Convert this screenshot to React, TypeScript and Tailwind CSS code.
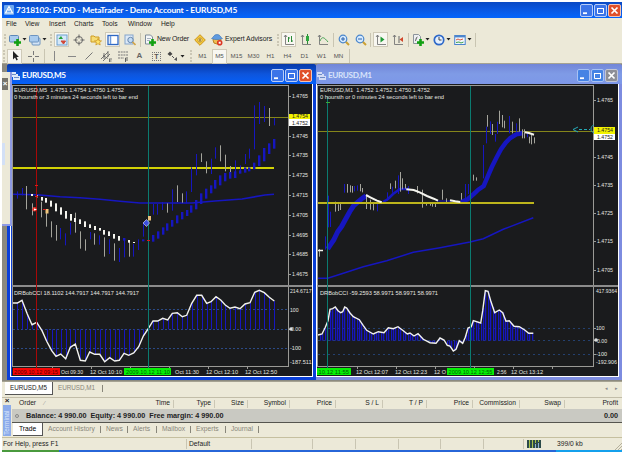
import type { ReactNode } from 'react'
import clsx from 'clsx'

type Point = [number, number]
type Bar = [number, number, number]

const BLUE = '#1616c0'
const GRAY = '#a4a49c'

// Chart data is kept at three times the drawn size.
const join = (points: Point[], ox: number, oy: number) =>
  points.map(([x, y]) => `${(ox + x / 3).toFixed(1)},${(oy + y / 3).toFixed(1)}`).join(' ')

function Bars({
  data,
  ox,
  oy,
  color,
  width = 1,
}: {
  data: Bar[]
  ox: number
  oy: number
  color: string
  width?: number
}) {
  return (
    <>
      {data.map(([x, top, bottom], i) => (
        <rect
          key={i}
          x={Math.round(ox + x / 3 - width / 2)}
          y={oy + top / 3}
          width={width}
          height={(bottom - top) / 3}
          fill={color}
        />
      ))}
    </>
  )
}

function Label({
  x,
  y,
  w,
  size = 6.2,
  children,
  fill = '#e6e6e0',
}: {
  x: number
  y: number
  w: number
  size?: number
  children: string
  fill?: string
}) {
  return (
    <text
      x={x}
      y={y + 2.2}
      textLength={w}
      lengthAdjust="spacingAndGlyphs"
      fill={fill}
      fontSize={size}
      fontFamily='"Liberation Sans Narrow", "Liberation Sans", sans-serif'
    >
      {children}
    </text>
  )
}

function Frame({ right, ticks }: { right: number; ticks: number[] }) {
  return (
    <g stroke="#9a9a96" fill="none" shapeRendering="crispEdges">
      <path d={`M0 1.5H${right}`} />
      <path d={`M.5 1V283M${right + 0.5} 1V283`} />
      <path d="M0 202H600" strokeWidth="2" stroke="#8c8c8c" />
      <path d={`M0 282.5H${right}`} />
      {ticks.map((t) => (
        <path key={t} d={`M${right} ${t + 0.5}h3`} />
      ))}
      {[40, 79, 118, 157, 196, 235].map((t) => (
        <path key={t} d={`M${t + 0.5} 283v2`} />
      ))}
    </g>
  )
}

const m5Average: Point[] = [
  [0, 331], [74, 332], [144, 338], [204, 341], [264, 346], [324, 352], [384, 357], [540, 357],
  [609, 351], [690, 345], [759, 333], [786, 331],
]

const m5WhiteSteps: Bar[] = [
  [96, 42, 48], [110, 46, 52], [125, 51, 62], [138, 54, 68], [153, 62, 80], [168, 70, 94],
  [182, 82, 104], [197, 93, 116], [212, 102, 122], [226, 114, 126], [240, 118, 132],
  [255, 124, 141], [270, 133, 144], [284, 138, 150], [299, 144, 152], [313, 150, 164],
  [328, 154, 168], [342, 162, 176], [357, 168, 182], [387, 180, 188], [401, 186, 189],
]

const m5BlueSteps: Bar[] = [
  [372, 174, 182], [430, 178, 184], [459, 165, 185], [474, 154, 176],
  [489, 142, 164], [503, 130, 152], [516, 120, 140], [531, 106, 130], [546, 96, 118],
  [561, 90, 108], [575, 76, 98], [590, 60, 88], [603, 40, 72], [618, 26, 56], [633, 16, 40],
  [647, 0, 26], [662, -14, 16], [676, -21, 4], [691, -24, -4], [705, -26, -6], [721, -29, -19],
  [735, -38, -22], [749, -38, -26], [764, -52, -32], [778, -74, -42], [793, -96, -56],
  [807, -110, -78], [822, -123, -94],
]

const m5Gray: Bar[] = [
  [80, 18, 88], [96, 70, 106], [125, 65, 112], [140, 90, 140], [153, 124, 172], [168, 135, 182],
  [226, 98, 158], [240, 154, 206], [255, 178, 212], [284, 160, 194], [313, 172, 230],
  [342, 190, 242], [387, 180, 230], [503, 70, 98], [532, 16, 66], [547, 40, 68],
  [605, -80, -54], [619, -56, -20], [661, -104, -56], [676, -76, -26], [691, -42, -24],
  [808, -216, -162],
]

const m5Blue: Bar[] = [
  [52, 34, 56], [66, 24, 46], [182, 144, 178], [197, 160, 196], [211, 128, 164], [270, 156, 178],
  [299, 166, 194], [328, 178, 222], [357, 204, 246], [372, 180, 232], [401, 192, 230],
  [416, 178, 210], [430, 128, 170], [459, 72, 104], [473, 72, 104],
  [487, 66, 90], [517, 28, 92], [560, 34, 70], [575, -38, 36], [590, -78, -14], [633, -64, -18],
  [647, -98, -64], [705, -59, -24], [721, -44, -26], [735, -78, -48], [749, -94, -64],
  [764, -224, -92], [778, -234, -168], [793, -222, -174], [822, -186, -164],
]

const m5Cci: Point[] = [
  [36, 57], [52, 57], [66, 49], [82, 90], [96, 122], [110, 115], [126, 140], [140, 172],
  [155, 200], [168, 217], [182, 210], [197, 224], [211, 190], [226, 180], [241, 229], [256, 231],
  [269, 204], [284, 211], [299, 211], [314, 233], [329, 221], [344, 231], [358, 229], [372, 208],
  [386, 214], [401, 207], [416, 188], [430, 156], [444, 135], [459, 111], [473, 111], [488, 103],
  [503, 108], [517, 88], [532, 86], [547, 98], [560, 94], [575, 58], [590, 34], [605, 34],
  [620, 58], [633, 53], [648, 38], [662, 48], [676, 63], [690, 73], [705, 69], [720, 74],
  [735, 60], [750, 56], [764, 25], [778, 19], [793, 26], [808, 40], [823, 51],
]

function M5Chart() {
  return (
    <svg className="block" width="300" height="292" viewBox="0 0 300 292">
      <rect width="300" height="292" fill="#1a1b1d" />
      <path d="M1 33.5H276" stroke="#85851a" shapeRendering="crispEdges" />
      <path d="M1 84H262" stroke="#d2d205" strokeWidth="2" shapeRendering="crispEdges" />
      <polyline points={join(m5Average, 0, 0)} fill="none" stroke={BLUE} strokeWidth="1.6" />
      <Bars data={m5Gray} ox={-12} oy={96} color={GRAY} />
      <Bars data={m5Blue} ox={-12} oy={96} color={BLUE} />
      <Bars data={m5WhiteSteps} ox={-12} oy={96} color="#f4f4ee" width={2} />
      <Bars data={m5BlueSteps} ox={-12} oy={96} color={BLUE} width={2.4} />
      <path d="M1 225.5H276M1 245.5H276M1 264.5H276" stroke="#2b4a86" strokeDasharray="2 2" />
      {m5Cci.map(([x, y]) => (
        <rect
          key={x}
          x={Math.round(x / 3 - 12)}
          y={200 + Math.min(y, 136) / 3}
          width="1"
          height={Math.abs(y - 136) / 3}
          fill={BLUE}
        />
      ))}
      <polyline points={join(m5Cci, -12, 200)} fill="none" stroke="#f2f2ee" strokeWidth="1.4" />
      <Frame right={276} ticks={[12, 52, 71, 91, 111, 131, 151, 170, 190, 245]} />
      <path d="M24.5 2V284" stroke="#a80808" shapeRendering="crispEdges" />
      <path d="M136.5 2V284" stroke="#0b7b70" shapeRendering="crispEdges" />
      <path d="M23 101.5h3M23 112.5h3M135 156.5h3" stroke="#e01818" />
      <circle cx="22.5" cy="125.3" r="2.2" fill="#e8342a" />
      <path d="M22 124.5l3 1-3 1z" fill="#fff" />
      <rect x="33.5" y="125" width="3" height="4.5" fill="#f0c67c" />
      <path d="M31 125.5h3" stroke="#d02020" />
      <path d="M131 139l3.5-3.5 3 3.5-3 3.5z" fill="#3c50e0" stroke="#e6e9ff" strokeWidth=".6" />
      <rect x="136" y="132" width="3" height="4.5" fill="#e9c17c" />
      <Label x={2} y={6} w={110}>EURUSD,M5 &nbsp;1.4751 1.4754 1.4750 1.4752</Label>
      <Label x={2} y={12.5} w={124}>0 hoursth or 3 minutes 24 seconds left to bar end</Label>
      <Label x={2} y={208.5} w={125}>DRBobCCI 18.1102 144.7917 144.7917 144.7917</Label>
      {[
        [12, '1.4765'], [52, '1.4745'], [71, '1.4735'], [91, '1.4725'], [111, '1.4715'],
        [131, '1.4705'], [151, '1.4695'], [170, '1.4685'], [190, '1.4675'],
      ].map(([y, text]) => (
        <Label key={text} x={280} y={y as number} w={16}>{text as string}</Label>
      ))}
      <rect x="277" y="30" width="21" height="6" fill="#f2f200" />
      <Label x={280} y={32} w={16} fill="#222">1.4754</Label>
      <rect x="277" y="35" width="21" height="7" fill="#fff" />
      <Label x={280} y={38.5} w={16} fill="#222">1.4752</Label>
      <Label x={278} y={207} w={21.5} size={5.3}>214.6717</Label>
      <Label x={278} y={225.5} w={8.5}>100</Label>
      <circle cx="279" cy="245" r="1.8" fill="#ddd" />
      <Label x={279} y={245} w={10}>0.00</Label>
      <Label x={278} y={264} w={11}>-100</Label>
      <Label x={278} y={278} w={21.5} size={5.3}>-187.511</Label>
      <Label x={49} y={287.5} w={22}>Oct 09:30</Label>
      <Label x={78} y={287.5} w={32}>12 Oct 10:10</Label>
      <Label x={163} y={287.5} w={24}>Oct 11:30</Label>
      <Label x={194} y={287.5} w={32}>12 Oct 12:10</Label>
      <Label x={233} y={287.5} w={32}>12 Oct 12:50</Label>
      <rect x="1" y="284" width="47" height="7" fill="#f60505" />
      <Label x={2} y={287.5} w={44} fill="#5b0000">2009.10.12 09:15</Label>
      <rect x="112" y="284" width="47" height="7" fill="#06f006" />
      <Label x={114} y={287.5} w={44} fill="#045c04">2009.10.12 11:10</Label>
    </svg>
  )
}

const m1Average: Point[] = [
  [3, 265], [32, 265], [79, 250], [139, 230], [209, 212], [289, 187], [369, 173], [459, 156],
  [499, 146], [559, 118], [649, 83],
]

const m1Rise: Point[] = [
  [32, 492], [40, 480], [50, 465], [62, 440], [74, 424], [86, 402], [98, 380],
  [110, 362], [124, 350], [138, 338], [147, 333],
]

const m1Climb: Point[] = [
  [432, 354], [452, 346], [470, 330], [484, 317], [500, 306], [512, 278],
  [524, 250], [538, 222], [552, 196], [566, 176], [580, 162], [598, 151], [618, 147],
]

const m1WhiteRuns: Point[][] = [
  [[147, 333], [160, 340], [180, 350], [194, 355]],
  [[268, 316], [290, 318], [308, 325], [330, 336], [350, 344], [363, 350]],
  [[399, 349], [415, 352], [430, 354]],
  [[624, 145], [636, 147], [651, 152]],
]

const m1Gray: Bar[] = [
  [8, 495, 518], [55, 353, 383], [64, 361, 381], [71, 354, 378], [92, 300, 326],
  [99, 304, 325], [107, 306, 326], [129, 300, 322], [135, 312, 325], [149, 335, 375],
  [161, 347, 377], [169, 360, 379], [219, 298, 315], [235, 290, 313], [250, 264, 323],
  [257, 283, 316], [265, 300, 314], [301, 306, 328], [317, 317, 371], [329, 355, 365],
  [339, 355, 365], [347, 355, 368], [354, 355, 369], [377, 317, 347], [389, 343, 356],
  [434, 327, 347], [470, 272, 290], [479, 280, 290], [512, 93, 128],
  [525, 120, 153], [548, 80, 120], [556, 93, 130], [563, 110, 133], [586, 113, 148],
  [608, 103, 143], [616, 136, 163], [623, 136, 163], [636, 158, 178], [644, 153, 181],
  [651, 160, 178],
]

const m1Blue: Bar[] = [
  [26, 457, 497], [34, 335, 430], [41, 383, 429], [82, 300, 326], [112, 306, 322], [122, 304, 320],
  [227, 308, 326], [244, 274, 330], [273, 306, 330], [180, 360, 382], [212, 325, 350],
  [445, 300, 352], [455, 300, 330], [500, 183, 283], [507, 128, 178],
  [519, 112, 150], [536, 150, 173], [542, 113, 150], [578, 96, 148], [599, 118, 143],
  [608, 114, 150], [630, 146, 160],
]

const m1Cci: Point[] = [
  [24, 153], [36, 150], [46, 130], [54, 110], [60, 76], [68, 74], [76, 69], [84, 80], [92, 86],
  [98, 83], [104, 69], [110, 72], [120, 87], [130, 98], [148, 107], [160, 125], [170, 139],
  [190, 150], [205, 143], [222, 146], [235, 131], [250, 134], [264, 128], [280, 140], [292, 150],
  [300, 147], [312, 156], [324, 149], [340, 166], [360, 176], [378, 178], [390, 162], [402, 168],
  [412, 184], [420, 186], [430, 201], [438, 196], [448, 170], [458, 178], [466, 160], [474, 132],
  [484, 128], [490, 110], [512, 117], [518, 80], [526, 20], [534, 22], [542, 50], [554, 86],
  [568, 78], [578, 86], [588, 112], [598, 110], [612, 127], [628, 128], [644, 138], [656, 148],
  [670, 148],
]

function valueAt(points: Point[], x: number) {
  const i = points.findIndex((p) => p[0] >= x)
  if (i < 1) return points[0][1]
  const [x0, y0] = points[i - 1]
  const [x1, y1] = points[i]
  return y0 + ((y1 - y0) * (x - x0)) / (x1 - x0)
}

const m1Columns = Array.from({ length: 88 }, (_, i) => 30 + i * 7.3).filter((x) => x < 671)

function M1Chart() {
  return (
    <svg className="block" width="301" height="292" viewBox="0 0 301 292">
      <rect width="301" height="292" fill="#1a1b1d" />
      <path d="M1 47.5H276" stroke="#85851a" shapeRendering="crispEdges" />
      <polyline points={join(m1Average, 0, 106)} fill="none" stroke={BLUE} strokeWidth="1.5" />
      <Bars data={m1Blue} ox={0} oy={0} color={BLUE} />
      <polyline points={join(m1Rise, 0, 1)} fill="none" stroke={BLUE} strokeWidth="5" />
      <path d="M66 118l5-3 5-5 7-5 8 0" fill="none" stroke={BLUE} strokeWidth="2.5" />
      <path d="M120 117h15" stroke={BLUE} />
      <polyline points={join(m1Climb, 0, 0)} fill="none" stroke={BLUE} strokeWidth="4.5" />
      <Bars data={m1Gray} ox={0} oy={0} color={GRAY} />
      <path d="M1 119H217" stroke="#bdb51c" strokeWidth="2" shapeRendering="crispEdges" />
      <path d="M1 166.5h5" stroke="#f4f4ee" strokeWidth="1.5" />
      {m1WhiteRuns.map((run, i) => (
        <polyline key={i} points={join(run, 0, 0)} fill="none" stroke="#f4f4ee" strokeWidth="2" />
      ))}
      <path d="M1 244.5H276M1 256.5H276M1 270.5H276" stroke="#24406f" strokeDasharray="2 3" />
      {m1Columns.map((x) => {
        const y = valueAt(m1Cci, x)
        return (
          <rect
            key={x}
            x={Math.round(x / 3 - 7)}
            y={200 + Math.min(y, 170) / 3}
            width="1.3"
            height={Math.abs(y - 170) / 3}
            fill={BLUE}
          />
        )
      })}
      <polyline points={join(m1Cci, -7, 200)} fill="none" stroke="#f2f2ee" strokeWidth="1.4" />
      <Frame right={276} ticks={[16, 73, 101, 129, 157, 186, 244, 256, 270]} />
      <path d="M10.5 12V284M153.5 2V284" stroke="#0b7b70" shapeRendering="crispEdges" />
      <path d="M9 18.5h4" stroke="#38a838" />
      <path d="M261 43l-5 2.5 5 2.5" fill="none" stroke="#25a9b5" />
      <path d="M262 45.5H273" stroke="#25a9b5" strokeDasharray="3 2" />
      <path d="M277 41c-4 1-4 7 0 8" fill="none" stroke="#25a9b5" />
      <Label x={3} y={6} w={110}>EURUSD,M1 &nbsp;1.4752 1.4752 1.4750 1.4752</Label>
      <Label x={3} y={12.5} w={124}>0 hoursth or 0 minutes 24 seconds left to bar end</Label>
      <Label x={3} y={208.5} w={118}>DRBobCCI -59.2593 58.9971 58.9971 58.9971</Label>
      {[
        [16, '1.4765'], [73, '1.4745'], [101, '1.4735'], [129, '1.4725'], [157, '1.4715'],
        [186, '1.4705'],
      ].map(([y, text]) => (
        <Label key={text} x={280} y={y as number} w={16}>{text as string}</Label>
      ))}
      <rect x="277" y="43" width="21" height="7" fill="#f2f200" />
      <Label x={280} y={46} w={16} fill="#222">1.4754</Label>
      <rect x="277" y="50" width="21" height="6" fill="#fff" />
      <Label x={280} y={53} w={16} fill="#222">1.4752</Label>
      <Label x={279} y={207} w={21} size={5.3}>417.9364</Label>
      <Label x={279} y={244} w={8.5}>100</Label>
      <circle cx="279" cy="256" r="1.8" fill="#ddd" />
      <Label x={280} y={256.5} w={10}>0.00</Label>
      <Label x={279} y={269.5} w={11}>-100</Label>
      <Label x={279} y={278} w={21} size={5.1}>-192.906</Label>
      <Label x={39} y={287.5} w={32}>12 Oct 12:07</Label>
      <Label x={78} y={287.5} w={32}>12 Oct 12:23</Label>
      <Label x={117} y={287.5} w={12}>12 O</Label>
      <Label x={180} y={287.5} w={9.5}>2:56</Label>
      <Label x={194} y={287.5} w={32}>12 Oct 13:12</Label>
      <rect x="0" y="284" width="34" height="7" fill="#06f006" />
      <Label x={0} y={287.5} w={32} fill="#045c04">.10.12 11:55</Label>
      <rect x="130" y="284" width="47" height="7" fill="#06f006" />
      <Label x={131.5} y={287.5} w={44} fill="#045c04">2009.10.12 12:55</Label>
    </svg>
  )
}

function CaptionButton({ kind, active = true }: { kind: 'min' | 'max' | 'close'; active?: boolean }) {
  const color =
    kind !== 'close'
      ? active
        ? 'bg-[#3c74e8] border-[#b9cdf8]'
        : 'bg-[#4583e4] border-[#a8c2f4]'
      : active
        ? 'bg-[#e0502a] border-[#f2c4b4]'
        : 'bg-[#8e8f96] border-[#c3c6d4]'
  return (
    <span className={clsx('flex size-[13px] items-center justify-center rounded-[2px] border', color)}>
      <svg width="9" height="9" viewBox="0 0 9 9" stroke="#fff" fill="none">
        {kind === 'min' && <path d="M1 7.2h4" strokeWidth="1.8" />}
        {kind === 'max' && <path d="M1 2.5h7M1.5 2v5.5h6V2" />}
        {kind === 'close' && <path d="M1.5 1.5l6 6M7.5 1.5l-6 6" strokeWidth="1.7" />}
      </svg>
    </span>
  )
}

function ChartWindow({ title, active, children }: { title: string; active: boolean; children: ReactNode }) {
  return (
    <section
      className={clsx(
        'flex h-[316px] shrink-0 flex-col rounded-t-[3px]',
        active ? 'w-[309px] bg-[#0a3fd8]' : 'w-[306px] bg-[#7d8ce0]',
      )}
    >
      <header
        className={clsx(
          'flex h-5 shrink-0 items-center rounded-t-[3px] pt-0.5',
          active
            ? 'bg-linear-to-b from-[#0839a8] via-[#0d55dc] to-[#0460fa] pl-[4px] pr-[4px]'
            : 'bg-linear-to-b from-[#7286d8] via-[#7f9be6] to-[#7d97e8] pl-[1px] pr-[4px]',
        )}
      >
        <svg width="9" height="9" viewBox="0 0 9 9">
          <path d="M0 1h5v2h2v2h2v4H2V6H0z" fill={active ? '#dfe9fa' : '#d3dcf5'} />
          <path d="M1 3.5h4M3 6.5h5" stroke="#5377b8" strokeWidth=".8" />
        </svg>
        <h2
          className={clsx(
            "ml-0.5 flex-1 font-['Lato','Liberation_Sans',sans-serif] text-[8.2px] font-bold tracking-[-0.38px]",
            active ? 'text-white' : 'text-[#d8e2fa]',
          )}
        >
          {title}
        </h2>
        <div className="flex gap-px">
          <CaptionButton kind="min" active={active} />
          <CaptionButton kind="max" active={active} />
          <CaptionButton kind="close" active={active} />
        </div>
      </header>
      <div
        className={clsx(
          'h-[293px] overflow-hidden border-r border-b border-white',
          active ? 'ml-[3px] mr-[3px] border-l pl-px' : 'mr-[3px] border-l',
        )}
      >
        {children}
      </div>
    </section>
  )
}

const Grip = ({ className }: { className: string }) => (
  <span className={clsx('flex shrink-0 items-center justify-center', className)}>
    <span className="h-3 w-0 border-l-2 border-dotted border-[#cbc7b5]" />
  </span>
)

const Separator = ({ className }: { className: string }) => (
  <span className={clsx('flex shrink-0 items-center justify-center', className)}>
    <span className="h-3.5 w-px bg-[#c9c5b2]" />
  </span>
)

function Tool({
  className = 'w-[17px]',
  pressed,
  menu,
  children,
}: {
  className?: string
  pressed?: boolean
  menu?: boolean
  children: ReactNode
}) {
  return (
    <span className={clsx('flex shrink-0 items-center justify-center', className)}>
      <span
        className={clsx(
          'flex h-[15px] items-center justify-center gap-px',
          pressed && 'w-[15px] border border-[#cfcab8] bg-[#f8f7f1]',
        )}
      >
        {children}
        {menu && (
          <svg width="5" height="3" viewBox="0 0 5 3">
            <path d="M.5 0h4L2.5 2.500z" fill="#222" />
          </svg>
        )}
      </span>
    </span>
  )
}

const Icon = ({ children }: { children: ReactNode }) => (
  <svg className="shrink-0" width="12" height="12" viewBox="0 0 12 12" fill="none" stroke="#4e4e4e">
    {children}
  </svg>
)

const Plus = () => <path d="M8.500 5v7M5 8.500h7" stroke="#12a012" strokeWidth="2.6" />
const Axes = () => <path d="M2.500 1v9.500H11M1 3l1.500-2L4 3" stroke="#777" strokeWidth=".9" />

function MainToolbar() {
  return (
    <div className="flex h-[17px] items-center">
      <Grip className="w-1.5" />
      <Tool className="w-[19px]" menu>
        <Icon>
          <rect x=".5" y="1.5" width="9" height="6.5" rx="1" fill="#a9cbee" stroke="#5c87b8" />
          <Plus />
        </Icon>
      </Tool>
      <Tool className="w-[22px]" menu>
        <Icon>
          <rect x="3" y="4" width="8" height="7" rx="1" fill="#d3e3f5" stroke="#6d94c0" />
          <rect x=".5" y="1.5" width="9" height="6.5" rx="1" fill="#a9cbee" stroke="#6d94c0" />
        </Icon>
      </Tool>
      <Grip className="w-1" />
      <Tool pressed>
        <Icon>
          <rect x="1" y="1" width="10" height="10" fill="#d6e8f8" stroke="#6ba0d0" />
          <path d="M2.500 5l2.500-3 2 3z" fill="#22a038" stroke="none" />
          <path d="M5 7h4.500L7.500 10z" fill="#d04838" stroke="#d04838" />
        </Icon>
      </Tool>
      <Tool>
        <Icon>
          <circle cx="6" cy="6" r="3.5" stroke="#666" />
          <path d="M6 .500v4M6 7.500v4M.500 6h4M7.500 6h4" stroke="#666" />
        </Icon>
      </Tool>
      <Tool>
        <Icon>
          <path d="M1 2h3l1 1h4v5H1z" fill="#f6dc74" stroke="#cf9c22" />
          <path
            d="M8 4.500l1 2.200 2.500.2-1.900 1.600.6 2.500L8 9.700 5.800 11l.6-2.500-1.900-1.600 2.500-.2z"
            fill="#ffe469"
            stroke="#c9901c"
            strokeWidth=".7"
          />
        </Icon>
      </Tool>
      <Tool pressed>
        <Icon>
          <rect x="1" y="1.5" width="10" height="9" fill="#fff" stroke="#2e68c4" strokeWidth="1.3" />
          <path d="M3.500 2v8" stroke="#6b9ade" strokeWidth="1.5" />
        </Icon>
      </Tool>
      <Tool>
        <Icon>
          <rect x="1" y="1" width="8" height="9" fill="#dde9f7" stroke="#84a5cc" />
          <circle cx="6.5" cy="6" r="2.7" fill="#c4dcf5" stroke="#6787ad" />
          <path d="M8.500 8l3 3" stroke="#d1a445" strokeWidth="1.6" />
        </Icon>
      </Tool>
      <Separator className="w-[5px]" />
      <span className="flex w-[47px] shrink-0 items-center gap-px pl-px whitespace-nowrap">
        <Icon>
          <path d="M1.500 1h5l2 2v7h-7z" fill="#f4f6f8" stroke="#7e8c99" />
          <path d="M3 4.500h4M3 6.500h3" stroke="#8797a6" strokeWidth=".7" />
          <Plus />
        </Icon>
        <span className="text-[6.9px] tracking-[-0.15px]">New Order</span>
      </span>
      <Tool className="w-5">
        <Icon>
          <path d="M6 .700L11.300 6 6 11.300.700 6z" fill="#f7cd3c" stroke="#cb921a" />
          <circle cx="6" cy="6" r="2.2" fill="#fbe796" stroke="#b58220" strokeWidth=".7" />
          <path d="M6 4.500v3" stroke="#7e5b10" strokeWidth="1.2" />
        </Icon>
      </Tool>
      <span className="flex w-[65px] shrink-0 items-center gap-[2px] pl-px whitespace-nowrap">
        <Icon>
          <circle cx="6" cy="6" r="4" fill="#f0bd52" stroke="#b98526" />
          <path
            d="M.500 4.500C3 3 2.500.500 6 .500s3 2.500 5.500 4c-3 1.500-8 1.500-11 0z"
            fill="#5f9be0"
            stroke="#3f75b5"
            strokeWidth=".6"
          />
          <circle cx="8.7" cy="8.7" r="2.8" fill="#dc3522" stroke="none" />
          <path d="M7.700 7.700h2v2h-2z" fill="#fff" stroke="none" />
        </Icon>
        <span className="text-[6.9px] tracking-[-0.05px]">Expert Advisors</span>
      </span>
      <Grip className="w-[5px]" />
      <Tool pressed>
        <Icon>
          <Axes />
          <path d="M5.500 3v5M7 4h-1.500M8.500 2v6M8.500 7H10" stroke="#2b8a37" />
        </Icon>
      </Tool>
      <Tool>
        <Icon>
          <Axes />
          <path d="M7.500 0v10" stroke="#2b8a37" />
          <rect x="6" y="2" width="3" height="5" fill="#2fa83e" stroke="none" />
        </Icon>
      </Tool>
      <Tool>
        <Icon>
          <Axes />
          <path d="M3 7c2-5 4-4 8 1" stroke="#49a455" />
        </Icon>
      </Tool>
      <Separator className="w-1" />
      <Tool>
        <Icon>
          <path d="M7.500 7.500l3.500 3.500" stroke="#cda032" strokeWidth="2" />
          <circle cx="5" cy="5" r="3.8" fill="#d8ebfd" stroke="#4a86cc" strokeWidth="1.2" />
          <path d="M5 3v4M3 5h4" stroke="#2a62ad" />
        </Icon>
      </Tool>
      <Tool>
        <Icon>
          <path d="M7.500 7.500l3.500 3.500" stroke="#cda032" strokeWidth="2" />
          <circle cx="5" cy="5" r="3.8" fill="#d8ebfd" stroke="#4a86cc" strokeWidth="1.2" />
          <path d="M3 5h4" stroke="#2a62ad" />
        </Icon>
      </Tool>
      <Separator className="w-[3px]" />
      <Tool pressed>
        <Icon>
          <Axes />
          <path d="M5.500 2.500v6L9.500 5.500z" fill="#1f9a35" stroke="none" />
        </Icon>
      </Tool>
      <Tool className="w-[18px]">
        <Icon>
          <Axes />
          <path d="M7 2v7" stroke="#666" />
          <path d="M11 3v5L7.500 5.500z" fill="#d2472a" stroke="none" />
        </Icon>
      </Tool>
      <Separator className="w-[3px]" />
      <Tool className="w-[21px]" menu>
        <Icon>
          <path d="M1.500.500h5l2 2v7h-7z" fill="#eef0f2" stroke="#8c949b" />
          <path d="M5.500 3c-2 0-1 4-2.500 4" stroke="#555" />
          <Plus />
        </Icon>
      </Tool>
      <Tool className="w-[22px]" menu>
        <Icon>
          <circle cx="6" cy="6" r="4.7" fill="#e4f0ff" stroke="#2d68c8" strokeWidth="1.7" />
          <path d="M6 3v3h2.500" stroke="#444" />
        </Icon>
      </Tool>
      <Tool className="w-5" menu>
        <Icon>
          <rect x=".7" y="1.5" width="10.5" height="9" fill="#f1f6fc" stroke="#4b84cc" />
          <path d="M1 2.500h10" stroke="#4b84cc" strokeWidth="1.8" />
          <path d="M2 6l2-1 2 1 3-1" stroke="#d25540" />
          <path d="M2 8.500l3-.500 2 1 2.500-1" stroke="#3c9f4b" />
        </Icon>
      </Tool>
      <Separator className="w-1" />
    </div>
  )
}

const timeframes = ['M1', 'M5', 'M15', 'M30', 'H1', 'H4', 'D1', 'W1', 'MN']

function LineToolbar() {
  return (
    <div className="flex h-4 items-center">
      <Grip className="w-1" />
      <Tool pressed>
        <Icon>
          <path d="M4 1v8.500l2-2 1.500 3 1.300-.700L7.500 7H10z" fill="#222" stroke="none" />
        </Icon>
      </Tool>
      <Tool className="w-[19px]">
        <Icon>
          <path d="M6.500 1v4M6.500 8v4M1 6.500h4M8 6.500h4" stroke="#777" />
        </Icon>
      </Tool>
      <Separator className="w-1" />
      <Tool>
        <Icon><path d="M5.500 1v10" stroke="#888" /></Icon>
      </Tool>
      <Tool>
        <Icon><path d="M2 6.500h8" stroke="#888" /></Icon>
      </Tool>
      <Tool>
        <Icon><path d="M2.500 9.500l7-7" stroke="#777" /></Icon>
      </Tool>
      <Tool>
        <Icon>
          <path
            d="M1 9l7-7M3 11l7-7M3 5.500l5 3M4 3v6M8 1v6M9 9h3M9 11h2.500M9.500 9v3"
            stroke="#666"
            strokeWidth=".9"
          />
        </Icon>
      </Tool>
      <Tool>
        <Icon>
          <path d="M1 2h10M1 5h10M1 8h6" stroke="#777" strokeDasharray="2 .7" />
          <path d="M8.500 12V8H11M8.500 10H11" stroke="#555" strokeWidth=".9" />
        </Icon>
      </Tool>
      <Tool>
        <span className="text-[8px] font-bold text-[#666]">A</span>
      </Tool>
      <Tool>
        <span className="flex size-[9px] items-center justify-center border border-dotted border-[#777] text-[7px] font-bold text-[#555]">
          T
        </span>
      </Tool>
      <Tool className="w-[22px]" menu>
        <Icon>
          <path d="M3 1.500l2.500 2.500L3 6 .500 4z" fill="#444" stroke="none" />
          <path d="M5 6l2 2" stroke="#555" />
          <path d="M7 9.500L10 7v4z" fill="#555" stroke="none" />
        </Icon>
      </Tool>
      <Grip className="w-[7px]" />
      {timeframes.map((label) => (
        <Tool key={label} pressed={label === 'M5'}>
          <span className="text-[6.2px] text-[#555]">{label}</span>
        </Tool>
      ))}
      <Separator className="w-1" />
    </div>
  )
}

const columns: [string, string][] = [
  ['Time', 'w-[129px]'], ['Type', 'w-[41px]'], ['Size', 'w-[33px]'], ['Symbol', 'w-[42px]'],
  ['Price', 'w-[46px]'], ['S / L', 'w-[47px]'], ['T / P', 'w-[44px]'], ['Price', 'w-[46px]'],
  ['Commission', 'w-[47px]'], ['Swap', 'w-[45px]'],
]

const terminalTabs: [string, string][] = [
  ['Account History', 'w-[58px]'], ['News', 'w-[27px]'], ['Alerts', 'w-[29px]'],
  ['Mailbox', 'w-[34px]'], ['Experts', 'w-[35px]'], ['Journal', 'w-[33px]'],
]

function Terminal() {
  return (
    <section className="flex h-[39px] border-t border-[#c2bda8]">
      <div className="flex w-2.5 shrink-0 flex-col items-center">
        <span className="h-[7px] text-[8px] leading-[6px] font-bold">×</span>
        <span className="flex h-[31px] w-[8px] rotate-180 items-center justify-start bg-[#8cabea] pt-px text-[6.5px] leading-none text-[#dbe6fb] [writing-mode:vertical-rl]">
          Terminal
        </span>
      </div>
      <div className="flex flex-1 flex-col">
        <div className="flex h-[11px] items-center">
          <span className="flex w-[33px] shrink-0 justify-between pl-[7px]">
            Order <span className="text-[6px] text-[#999]">∕</span>
          </span>
          {columns.map(([label, width], i) => (
            <span
              key={i}
              className={clsx('flex h-2 shrink-0 items-center justify-end border-r border-[#cbc7b5] pr-[3px]', width)}
            >
              {label}
            </span>
          ))}
          <span className="flex-1 pr-1 text-right">Profit</span>
        </div>
        <div className="flex h-[14px] items-center justify-between border-b border-[#55554f] bg-[#c9c9c2] pr-1 pl-[3px] text-[7.25px] font-bold">
          <span className="flex items-center gap-[7px]">
            <span className="size-[4px] rounded-full border border-[#888]" />
            <span>Balance: 4 990.00&nbsp; Equity: 4 990.00&nbsp; Free margin: 4 990.00</span>
          </span>
          <span>0.00</span>
        </div>
        <div className="flex h-[13px] items-center text-[#88867a]">
          <span className="mr-[4px] ml-px flex h-full w-[30px] items-center justify-center border-r border-b border-[#555] bg-white text-black">
            Trade
          </span>
          {terminalTabs.map(([label, width]) => (
            <span key={label} className={clsx('flex shrink-0 items-center justify-between pl-px', width)}>
              {label}
              <span className="mr-1 h-[7px] w-px bg-[#88867a]" />
            </span>
          ))}
        </div>
      </div>
    </section>
  )
}

function StatusBar() {
  return (
    <footer className="flex h-[13px] items-center border-t border-[#c5bf9f]">
      <span className="w-[184px] shrink-0 pl-px">For Help, press F1</span>
      <span className="flex h-2.5 w-[66px] shrink-0 items-center border-r border-l border-[#c9c5b2] pl-0.5">
        Default
      </span>
      <span className="h-2.5 w-[61px] shrink-0 border-r border-[#c9c5b2]" />
      <span className="h-2.5 w-[43px] shrink-0 border-r border-[#c9c5b2]" />
      <span className="h-2.5 w-[43px] shrink-0 border-r border-[#c9c5b2]" />
      <span className="h-2.5 w-[42px] shrink-0 border-r border-[#c9c5b2]" />
      <span className="h-2.5 w-[43px] shrink-0 border-r border-[#c9c5b2]" />
      <span className="h-2.5 w-10 shrink-0 border-r border-[#c9c5b2]" />
      <svg className="ml-[3px] shrink-0" width="14" height="8" viewBox="0 0 14 8">
        <rect width="14" height="8" fill="#2b4a4a" />
        <path d="M2.500 0v8M5.500 0v8M8.500 0v3M11.500 0v2" stroke="#a9c24c" />
        <path d="M8.500 4v4M11.500 3v5" stroke="#8fb0d8" />
      </svg>
      <span className="ml-4">399/0 kb</span>
      <svg className="mt-1 ml-auto" width="9" height="9" viewBox="0 0 9 9" stroke="#b5b09c">
        <path d="M1 9l8-8M4 9l5-5M7 9l2-2" />
      </svg>
    </footer>
  )
}

export default function App() {
  return (
    <div className="h-[452px] w-[625px] overflow-hidden bg-white pt-0.5 pl-0.5 font-['Liberation_Sans',Arial,sans-serif] text-[6.7px] leading-none whitespace-nowrap text-[#222]">
      <div className="flex h-[450px] w-[620px] flex-col bg-[#ece9d8]">
        <header className="flex h-4 shrink-0 items-center bg-linear-to-b from-[#0a49c4] via-[#0a58e2] to-[#0465fc] pr-px pl-0.5">
          <svg width="10" height="10" viewBox="0 0 10 10">
            <rect width="10" height="10" rx="1" fill="#6ea8f0" />
            <path d="M5 1.500L1.500 8h7zM5 4v2" fill="none" stroke="#fff" strokeWidth="1.2" />
          </svg>
          <h1 className="ml-0.5 flex-1 font-['Lato','Liberation_Sans',sans-serif] text-[8.4px] font-bold tracking-[-0.14px] text-white">
            7318102: FXDD - MetaTrader - Demo Account - EURUSD,M5
          </h1>
          <div className="flex gap-px">
            <CaptionButton kind="min" />
            <CaptionButton kind="max" />
            <CaptionButton kind="close" />
          </div>
        </header>

        <nav className="flex h-[13px] shrink-0 items-center pl-1 text-[6.7px]">
          <span className="w-[19px]">File</span>
          <span className="w-6">View</span>
          <span className="w-[25px]">Insert</span>
          <span className="w-7">Charts</span>
          <span className="w-[26px]">Tools</span>
          <span className="w-[33px]">Window</span>
          <span>Help</span>
        </nav>

        <div className="h-[33px] shrink-0 border-b border-[#a5a292]">
          <MainToolbar />
          <LineToolbar />
        </div>

        <main className="relative flex h-[317px] shrink-0 bg-[#8b897f] pl-[5px]">
          <ChartWindow title="EURUSD,M5" active>
            <M5Chart />
          </ChartWindow>
          <ChartWindow title="EURUSD,M1" active={false}>
            <M1Chart />
          </ChartWindow>
          <aside className="absolute top-2 left-0 h-[154px] w-[10px] border-r-2 border-b-2 border-[#8f9be4] bg-[#ece9d8]">
            <span className="mt-1.5 flex h-3 w-[6px] items-center justify-center bg-[#77756c] text-[8px] font-bold text-white">
              ×
            </span>
            <span className="mt-[53px] block h-[22px] w-[3px] bg-[#d3e0f6]" />
          </aside>
        </main>

        <div className="flex h-4 shrink-0 border-t border-[#a5a292] pl-[3px] text-[6.3px]">
          <span className="flex h-[13px] w-[48px] items-center justify-center border-r border-b border-[#555] bg-white">
            EURUSD,M5
          </span>
          <span className="flex h-[13px] w-[49px] items-center pl-[5px] text-[#88867a]">EURUSD,M1</span>
          <span className="mt-[3px] h-[7px] w-px bg-[#88867a]" />
          <span className="mr-1 ml-auto flex gap-[7px] pt-[4px] text-[5px] text-[#888]">
            <span>◂</span>
            <span>▸</span>
          </span>
        </div>

        <Terminal />
        <div className="h-px shrink-0" />
        <StatusBar />
        <div className="flex flex-1">
          <span className="w-[57px] bg-[#4a9a3e]" />
          <span className="w-[497px] bg-[#2766d8]" />
          <span className="flex-1 bg-[#14a0ec]" />
        </div>
      </div>
    </div>
  )
}
